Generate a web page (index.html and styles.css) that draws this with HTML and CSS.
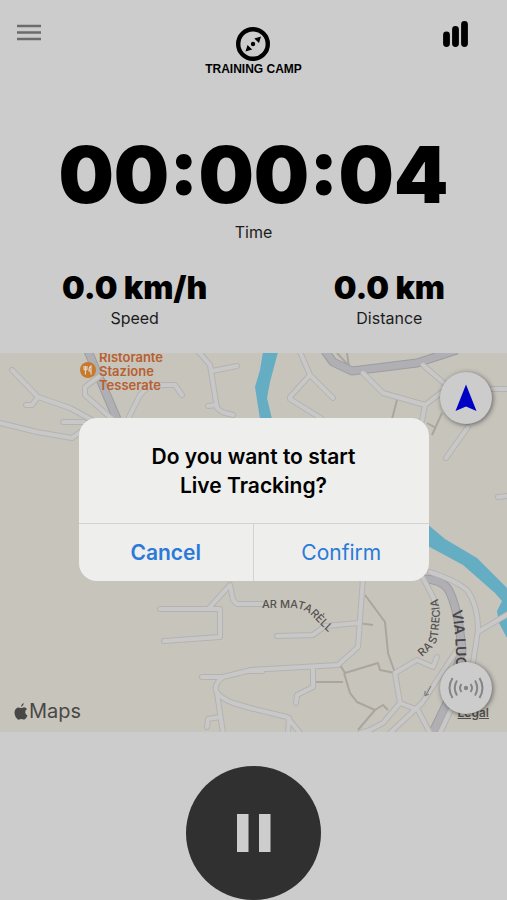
FILE: index.html
```
<!DOCTYPE html>
<html lang="en">
<head>
  <meta charset="utf-8">
  <meta name="viewport" content="width=device-width, initial-scale=1">
  <title>Training Camp</title>
  <link rel="stylesheet" href="styles.css">
</head>
<body>
  <header class="topbar">
    <button class="icon-button" aria-label="Menu">
      <svg width="24" height="18" viewBox="0 0 24 18"><path d="M0 2h24M0 8.500h24M0 15h24" stroke="#6b6b6b" stroke-width="2.500"/></svg>
    </button>
    <div class="brand">
      <svg width="34" height="34" viewBox="0 0 34 34">
        <circle cx="17" cy="17" r="14.800" fill="none" stroke="#000" stroke-width="4.400"/>
        <path d="M25 9.500l-2 6.500-4.700-4.500zM9.500 24.500l2-6.500 4.700 4.500z"/>
        <circle cx="17" cy="17" r="2.200"/>
      </svg>
      <span class="brand-name">TRAINING CAMP</span>
    </div>
    <button class="icon-button" aria-label="Statistics">
      <svg width="26" height="27" viewBox="0 0 26 27"><path d="M3.500 15v8.500M12.500 9.500v14M21.500 4.500v19" stroke="#000" stroke-width="6.800" stroke-linecap="round"/></svg>
    </button>
  </header>

  <section class="stats">
    <div class="stat">
      <div class="stat-time">00:00:04</div>
      <div class="stat-label">Time</div>
    </div>
    <div class="stat-row">
      <div class="stat">
        <div class="stat-value">0.0 km/h</div>
        <div class="stat-label">Speed</div>
      </div>
      <div class="stat">
        <div class="stat-value">0.0 km</div>
        <div class="stat-label">Distance</div>
      </div>
    </div>
  </section>

  <main class="map">
    <svg class="map-canvas" viewBox="0 0 507 379" preserveAspectRatio="xMidYMid slice">
      <defs>
        <path id="street-matarell" d="M262 255H291Q304 255 312 263L335 286"/>
        <path id="street-strecia" d="M422 304L432 295Q437 290 438 282L440 262Q439 250 435 232"/>
        <path id="street-lucerna" d="M452 258Q457 285 456 330"/>
        <g id="roads">
          <path d="M12 17L38 44L70 55L92 67M38 44L32 52H26M0 70L37 79L72 85L82 78M63 69H84M101 22L85 34V42L112 66"/>
          <path d="M128 66L140 42L150 32H175L182 42M198 -2L210 12L217 55L222 59L233 62M212 18L237 13M216 52L208 53"/>
          <path d="M300 -1L310 22L333 45M310 22L290 44V46L322 66M363 20L383 40L425 52L442 39M425 52L422 68M423 12L445 31M492 36H508M468 74L446 105M498 144L508 143"/>
          <path d="M160 256H220V284L164 288M210 254L230 232L233 247L237 251H262M202 324H221M262 318H247L223 324Q214 331 216 338Q220 345 233 350L250 355L287 364L300 380M217 340L223 380M220 364L208 366L207 374M289 365L288 380"/>
          <path d="M250 317L338 312L358 294L363 225M313 314V334L297 342L296 350M277 283L313 282L325 273L358 270M262 318L250 317"/>
          <path d="M360 380L370 377L383 370L400 350L395 320L417 307L433 314L437 304M400 350L418 357L430 380M390 380L422 350L457 297M423 225L433 244L437 256"/>
          <path d="M430 219Q455 227 467 237Q478 252 478 277L473 310L440 380M478 279L508 261"/>
        </g>
      </defs>
      <rect width="507" height="379" fill="#c7c4bc"/>
      <path d="M263 -1L260 17L255 34L260 66H272L267 45L270 29L278 -1zM426 170L445 186L477 205L508 236V287L499 270L497 258L502 248L495 240L463 212L426 192z" fill="#65adc3"/>
      <g fill="none" stroke="#aaa69f" stroke-width="2" stroke-linejoin="round">
        <path d="M365 242L385 269L388 300L395 320M340 312L345 320L378 310L380 317L395 320M315 329H343M344 320L350 340L357 349L375 357L358 377M375 357L383 352L388 357M358 270L373 272"/>
        <path d="M337 0L350 14M347 0L349 14M397 47L392 66M442 60L432 82M427 70L436 75"/>
      </g>
      <g fill="none" stroke-linejoin="round">
        <path d="M88 -2L117 66M325 -2L333 9L352 18L417 10L457 -3M423 226Q441 226 448 236Q458 253 462 297L447 350L432 381" stroke="#9d9ca1" stroke-width="9"/>
        <path d="M88 -2L117 66M325 -2L333 9L352 18L417 10L457 -3M423 226Q441 226 448 236Q458 253 462 297L447 350L432 381" stroke="#b0afb3" stroke-width="7"/>
      </g>
      <g fill="none" stroke-linecap="round" stroke-linejoin="round">
        <use href="#roads" stroke="#b5b3b0" stroke-width="6"/>
        <use href="#roads" stroke="#c9c8c8" stroke-width="4"/>
      </g>
      <path d="M431 333L426 342M425 338v5l4 -2" fill="none" stroke="#77736d"/>
      <g class="street">
        <text><textPath href="#street-matarell">AR MATARÈLL</textPath></text>
        <text><textPath href="#street-strecia">RA STRECIA</textPath></text>
        <text class="street-major"><textPath href="#street-lucerna">VIA LUC</textPath></text>
      </g>
      <circle cx="88" cy="17" r="8" fill="#c87a2a"/>
      <path d="M84 13v3q0 1 1.500 1t1.500 -1v-3M85.500 13v8.500M91 21.500V13q-2 1 -2 5h2" fill="none" stroke="#ddd5cb" stroke-width="1.200"/>
      <g class="place">
        <text x="99" y="9">Ristorante</text>
        <text x="99" y="23">Stazione</text>
        <text x="99" y="37">Tesserate</text>
      </g>
    </svg>

    <a class="legal" href="#legal">Legal</a>
    <div class="map-logo">
      <svg width="14" height="17" viewBox="0 0 14 17"><path d="M9.800 0Q10 2.500 7.200 4.100Q6.800 1.600 9.800 0zM7 5.100Q8 5 9.200 4.400Q11.500 3.900 13 5.900Q11 7.200 11.200 9.400Q11.400 11.500 13.500 12.400Q12.300 15.500 10.500 16.500Q9.500 16.700 8.600 16.200Q7.300 15.600 5.900 16.200Q4.800 16.900 3.800 16.500Q1 14.500 .5 10.600Q.2 6.500 3.300 4.800Q4.500 4.200 7 5.100z" fill="#4a4846"/></svg>
      <span>Maps</span>
    </div>

    <button class="map-button map-button-locate" aria-label="Center on my location">
      <svg width="24" height="30" viewBox="0 0 24 30"><path d="M12 1.500L22.500 28L12 23.500L1.500 28z" fill="#0000c4"/></svg>
    </button>
    <button class="map-button map-button-live" aria-label="Live tracking">
      <svg width="36" height="24" viewBox="0 0 36 24">
        <circle cx="18" cy="12" r="2.200" fill="#858585"/>
        <path d="M13.500 8Q10.500 12 13.500 16M22.500 8Q25.500 12 22.500 16M9 4.500Q4.500 12 9 19.500M27 4.500Q31.500 12 27 19.500M4.500 2Q-1.500 12 4.500 22M31.500 2Q37.500 12 31.500 22" fill="none" stroke="#858585" stroke-width="2"/>
      </svg>
    </button>

    <div class="alert" role="alertdialog" aria-labelledby="alert-title">
      <h1 class="alert-title" id="alert-title">Do you want to start<br>Live Tracking?</h1>
      <div class="alert-actions">
        <button class="alert-button alert-cancel">Cancel</button>
        <button class="alert-button">Confirm</button>
      </div>
    </div>
  </main>

  <footer class="controls">
    <button class="pause" aria-label="Pause">
      <svg width="34" height="38" viewBox="0 0 34 38"><path d="M0 0h11.500v38H0zM22 0h11.500v38H22z" fill="#cdcdcd"/></svg>
    </button>
  </footer>
</body>
</html>
```

FILE: styles.css
```
* {
  box-sizing: border-box;
}
body {
  margin: 0;
  min-height: 100vh;
  display: flex;
  flex-direction: column;
  background-color: #cccccc;
  color: #000;
  font-family: Inter, "Liberation Sans", sans-serif;
}
button {
  padding: 0;
  border: none;
  background: none;
  font-family: inherit;
  cursor: pointer;
}
svg {
  display: block;
}

/* top bar */
.topbar {
  display: grid;
  grid-template-columns: 1fr auto 1fr;
  align-items: start;
  padding: 20px 38px 0 17px;
}
.icon-button {
  padding-top: 4px;
}
.icon-button:last-child {
  justify-self: end;
  padding-top: 0;
}
.brand {
  display: flex;
  flex-direction: column;
  align-items: center;
  gap: 1px;
  padding: 7px 0 0 21px;
}
.brand-name {
  font: bold 12px/14px "Liberation Sans", Arial, sans-serif;
}

/* stats */
.stats {
  padding: 52px 62px 25px;
  text-align: center;
}
.stat-row {
  display: flex;
  justify-content: space-between;
  padding-top: 26px;
}
.stat-time {
  margin: 0 -20px;
  font-size: 78px;
  font-weight: 900;
  line-height: 94px;
  white-space: nowrap;
}
.stat-value {
  font-size: 32px;
  font-weight: 900;
  line-height: 40px;
}
.stat-label {
  font-size: 16px;
  line-height: 20px;
  color: #1c1c1c;
}

/* map */
.map {
  position: relative;
  flex: 1;
  padding: 65px 16px 151px;
  overflow: hidden;
}
.map-canvas {
  position: absolute;
  top: 0;
  left: 0;
  width: 100%;
  height: 100%;
}
.street {
  font-size: 11px;
  font-weight: 500;
  fill: #55524f;
}
.street-major {
  font-size: 14px;
  font-weight: 600;
  fill: #484644;
}
.place {
  font-size: 13px;
  font-weight: 600;
  fill: #b8602f;
}
.map-logo {
  position: absolute;
  left: 14px;
  bottom: 10px;
  display: flex;
  align-items: center;
  gap: 1px;
  font-size: 20px;
  line-height: 22px;
  color: #4a4846;
}
.legal {
  position: absolute;
  right: 18px;
  bottom: 12px;
  font-size: 12px;
  font-weight: 600;
  line-height: 14px;
  color: #55524f;
}
.map-button {
  position: absolute;
  right: 15px;
  display: grid;
  place-items: center;
  width: 52px;
  height: 52px;
  border-radius: 50%;
  background-color: #cccccc;
  box-shadow: 1px 1px 5px rgba(0, 0, 0, 0.5);
}
.map-button-locate {
  top: 19px;
}
.map-button-live {
  bottom: 18px;
}

/* alert */
.alert {
  position: relative;
  max-width: 350px;
  margin: 0 auto;
  border-radius: 18px;
  background-color: #eeeeec;
  overflow: hidden;
}
.alert-title {
  margin: 0;
  padding: 24px 20px 23px;
  font-size: 21px;
  font-weight: 600;
  line-height: 29px;
  text-align: center;
}
.alert-actions {
  display: flex;
  border-top: 1px solid #d3d3d1;
}
.alert-button {
  flex: 1;
  height: 57px;
  font-size: 21px;
  color: #2a7ad9;
}
.alert-cancel {
  border-right: 1px solid #d3d3d1;
  font-weight: 600;
}

/* controls */
.controls {
  display: flex;
  justify-content: center;
  padding-top: 34px;
}
.pause {
  display: grid;
  place-items: center;
  width: 135px;
  height: 134px;
  border-radius: 50%;
  background-color: #303030;
}
```
